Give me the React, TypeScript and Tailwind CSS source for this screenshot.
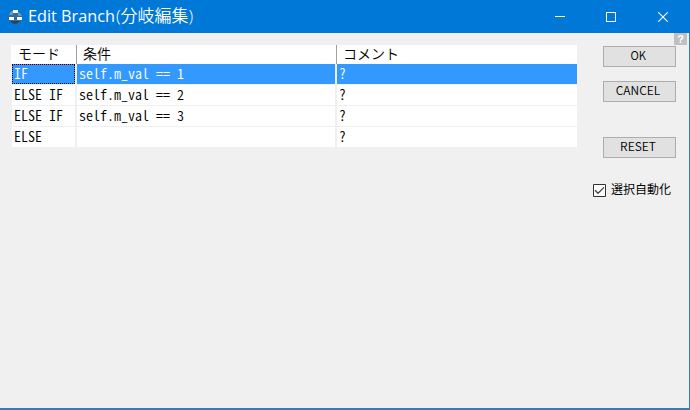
import React from "react";

const UI = "font-['Liberation_Sans','Noto_Sans_CJK_JP',sans-serif]";
const rows = [
  ["IF", "self.m_val == 1", "?"],
  ["ELSE IF", "self.m_val == 2", "?"],
  ["ELSE IF", "self.m_val == 3", "?"],
  ["ELSE", "", "?"],
];

function Cell({ text, selected, focus }: { text: string; selected: boolean; focus?: boolean }) {
  return (
    <div
      className={`h-5 overflow-hidden pl-0.5 ${selected ? "bg-[#3399ff] text-white" : "bg-white text-black"} ${
        focus ? "outline-1 -outline-offset-1 outline-dotted outline-black" : ""
      }`}
    >
      <span className="block w-max whitespace-pre font-['Noto_Sans_CJK_JP',monospace] text-[14px] font-[350] leading-[18px] [font-feature-settings:'hwid']">
        {text}
      </span>
    </div>
  );
}

function Button({ label, scale }: { label: string; scale: string }) {
  return (
    <button className="flex h-[21px] w-[73px] items-center justify-center border border-[#adadad] bg-[#e1e1e1] pr-[3px] pb-[3px] text-black">
      <span className={`block text-[12px] leading-4 font-[350] font-['Noto_Sans_CJK_JP',sans-serif] ${scale}`}>{label}</span>
    </button>
  );
}

export default function App() {
  return (
    <div className={`flex h-[410px] w-[690px] flex-col overflow-hidden bg-[#f0f0f0] ${UI}`}>
      <header className="flex h-[33px] shrink-0 items-center bg-[#0078d7] text-white">
        <svg className="ml-[7px] h-4 w-4 shrink-0" viewBox="0 0 16 16">
          <circle cx="8" cy="8" r="7" fill="#326c9d" />
          <path d="M2 6Q3 2 6 2v4H2M11 3q3 1 4 4h-4" fill="#5a9bc8" />
          <path d="M3 12h10q-2 3-5 3t-5-3" fill="#24455f" />
          <path d="M6 1h5v3H6zM2 8h5v3H2zM10 8h5v3h-5z" fill="#fff" />
        </svg>
        <h1 className="ml-[5px] w-[166px] whitespace-nowrap text-[16px] leading-[33px]">
          <svg className="h-[33px] w-[166px]">
            <text x="0" y="22" fill="white" fontSize="16.5" textLength="87" lengthAdjust="spacingAndGlyphs" fontFamily="Open Sans, sans-serif">
              Edit Branch
            </text>
            <text x="88" y="22" fill="white" fontSize="16.5" textLength="77" lengthAdjust="spacingAndGlyphs" fontWeight="350" fontFamily="Open Sans, Noto Sans CJK JP, sans-serif">
              (分岐編集)
            </text>
          </svg>
        </h1>
        <div className="ml-auto mr-[22px] flex items-center">
          <svg className="mr-[41px] h-[10px] w-[10px]" shapeRendering="crispEdges"><path d="M0 4.5h10" stroke="white" /></svg>
          <svg className="mr-[42px] h-[10px] w-[10px]" shapeRendering="crispEdges"><path d="M.5.5h9v9h-9z" fill="none" stroke="white" /></svg>
          <svg className="h-[10px] w-[10px]"><path d="M.3.3l9.4 9.4M9.7.3L.3 9.7" stroke="white" strokeWidth="1.1" /></svg>
        </div>
      </header>

      <main className="flex flex-1 border-r border-[#1883d7]">
        <section className="ml-[11px] mt-3 w-[566px]">
          <div className="grid h-[19px] grid-cols-[65px_260px_241px] bg-white text-[14px] font-[350] leading-[17px] text-black font-['Noto_Sans_CJK_JP',sans-serif]">
            <div className="pl-[7px]">モード</div>
            <div className="border-l border-[#a0a0a0] pl-[6px]">条件</div>
            <div className="border-l border-[#a0a0a0] pl-[6px]">コメント</div>
          </div>
          <div className="flex flex-col gap-px pl-px">
            {rows.map((row, i) => (
              <div key={i} className="grid grid-cols-[63px_258px_240px] gap-x-0.5">
                <Cell text={row[0]} selected={i === 0} focus={i === 0} />
                <Cell text={row[1]} selected={i === 0} />
                <Cell text={row[2]} selected={i === 0} />
              </div>
            ))}
          </div>
        </section>

        <aside className="ml-4 flex w-24 flex-col">
          <div className="mr-0.5 flex h-3 w-[13px] items-center justify-center self-end bg-[#c0c0c0] text-[11px] font-bold leading-3 text-white">?</div>
          <div className="ml-[10px] mt-px flex flex-col">
            <Button label="OK" scale="scale-x-[0.94]" />
            <div className="mt-[14px]"><Button label="CANCEL" scale="scale-x-100" /></div>
            <div className="mt-[35px]"><Button label="RESET" scale="scale-x-100" /></div>
          </div>
          <label className="mt-[22px] flex h-[17px] items-center whitespace-nowrap text-[12px] text-black font-['Noto_Sans_CJK_JP',sans-serif]">
            <svg className="mr-[5px] mt-[3px] h-[13px] w-[13px] shrink-0" viewBox="0 0 13 13">
              <path d="M.5.5h12v12H.5z" fill="white" stroke="#333" />
              <path d="M2 6.2l3 3.1L11 3.4" fill="none" stroke="#444" strokeWidth="1.3" />
            </svg>
            選択自動化
          </label>
        </aside>
      </main>
      <footer className="h-0.5 shrink-0 border-b border-[#55748d] bg-[#1883d7]" />
    </div>
  );
}
